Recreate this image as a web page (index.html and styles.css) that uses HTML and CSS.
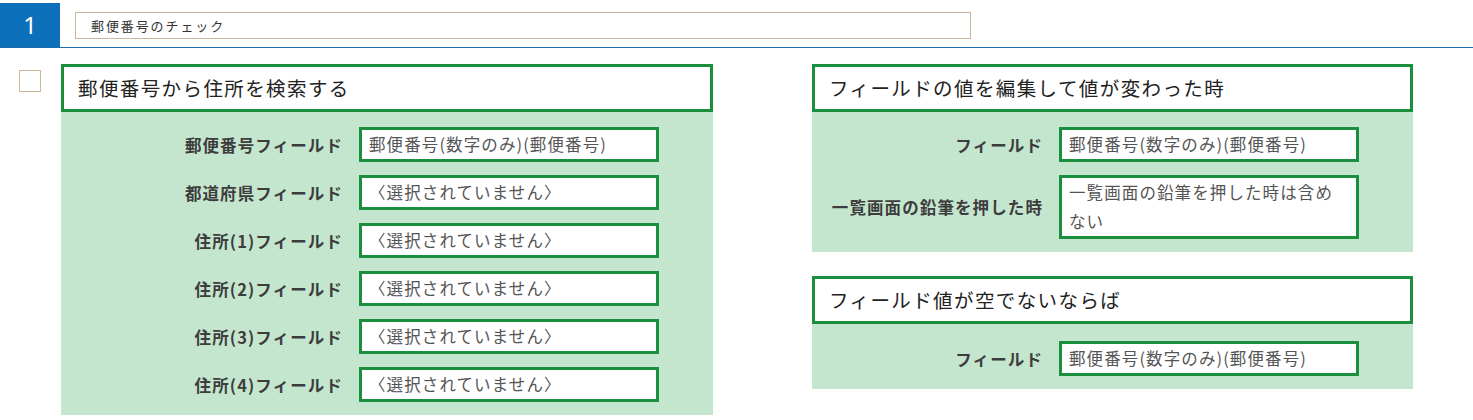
FILE: index.html
```html
<!DOCTYPE html>
<html lang="ja">
<head>
    <meta charset="UTF-8">
    <title>郵便番号のチェック</title>
    <link rel="stylesheet" href="styles.css">
</head>
<body>
    <div class="step-header">
        <div class="step-number">1</div>
        <div class="step-name">郵便番号のチェック</div>
    </div>

    <div class="step-body">
        <div class="step-check"></div>

        <!-- action -->
        <div class="card card-action">
            <div class="card-title">郵便番号から住所を検索する</div>
            <div class="card-fields">
                <div class="field-label">郵便番号フィールド</div>
                <div class="field-value">郵便番号(数字のみ)(郵便番号)</div>
                <div class="field-label">都道府県フィールド</div>
                <div class="field-value">〈選択されていません〉</div>
                <div class="field-label">住所(1)フィールド</div>
                <div class="field-value">〈選択されていません〉</div>
                <div class="field-label">住所(2)フィールド</div>
                <div class="field-value">〈選択されていません〉</div>
                <div class="field-label">住所(3)フィールド</div>
                <div class="field-value">〈選択されていません〉</div>
                <div class="field-label">住所(4)フィールド</div>
                <div class="field-value">〈選択されていません〉</div>
            </div>
        </div>

        <!-- triggers -->
        <div class="trigger-column">
            <div class="card">
                <div class="card-title">フィールドの値を編集して値が変わった時</div>
                <div class="card-fields">
                    <div class="field-label">フィールド</div>
                    <div class="field-value">郵便番号(数字のみ)(郵便番号)</div>
                    <div class="field-label">一覧画面の鉛筆を押した時</div>
                    <div class="field-value">一覧画面の鉛筆を押した時は含めない</div>
                </div>
            </div>

            <div class="card">
                <div class="card-title">フィールド値が空でないならば</div>
                <div class="card-fields card-fields-short">
                    <div class="field-label">フィールド</div>
                    <div class="field-value">郵便番号(数字のみ)(郵便番号)</div>
                </div>
            </div>
        </div>
    </div>
</body>
</html>
```

FILE: styles.css
```css
* {
    margin: 0;
    padding: 0;
    box-sizing: border-box;
}

body {
    font-family: 'Noto Sans CJK JP', 'Noto Sans', sans-serif;
    background: #ffffff;
    color: #333333;
}

/* step header */
.step-header {
    display: flex;
    align-items: center;
    gap: 15px;
    margin-top: 3px;
    border-bottom: 1px solid #1a6fb0;
}

.step-number {
    width: 60px;
    height: 44px;
    background: #0b6fba;
    color: white;
    font-family: 'Noto Sans', sans-serif;
    font-size: 24px;
    line-height: 44px;
    text-align: center;
}

.step-name {
    width: 896px;
    height: 27px;
    border: 1px solid #cdb597;
    padding-left: 15px;
    font-size: 13px;
    letter-spacing: 1.9px;
    line-height: 25px;
    color: #333;
}

/* step body */
.step-body {
    display: flex;
    align-items: flex-start;
    padding: 16px 0 0 19px;
}

.step-check {
    width: 22px;
    height: 22px;
    margin-top: 6px;
    margin-right: 20px;
    border: 1px solid #cdb597;
    background: white;
}

.card {
    width: 601px;
    background: #c5e6ce;
}

.card-action {
    width: 652px;
}

.trigger-column {
    margin-left: 99px;
    display: flex;
    flex-direction: column;
    gap: 24px;
}

.card-title {
    height: 48px;
    background: white;
    border: 3px solid #1a8f3e;
    padding-left: 14px;
    font-size: 19.5px;
    letter-spacing: 1.4px;
    line-height: 42px;
    color: #222;
}

.card-fields {
    display: grid;
    grid-template-columns: 1fr 300px;
    align-items: center;
    column-gap: 16px;
    row-gap: 13px;
    padding: 15px 54px 13px 0;
}

.card-fields-short {
    padding-top: 17px;
}

.field-label {
    text-align: right;
    font-size: 16.5px;
    font-weight: bold;
    letter-spacing: 1.1px;
    color: #3d3d3d;
}

.field-value {
    background: white;
    border: 3px solid #1a8f3e;
    padding: 0 9px 0 7px;
    font-size: 16.5px;
    letter-spacing: 1.1px;
    line-height: 29px;
    color: #555;
}
```
